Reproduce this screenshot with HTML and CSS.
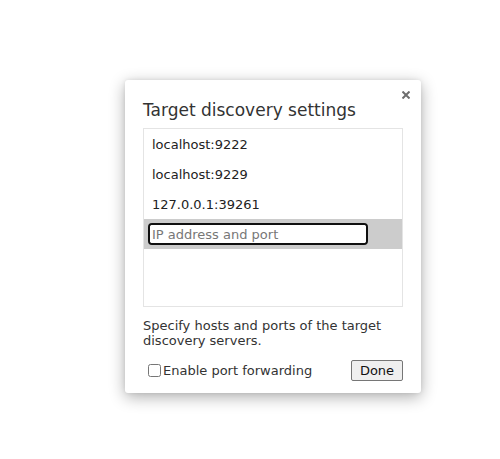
FILE: index.html
```html
<!DOCTYPE html>
<html>
<head>
<meta charset="utf-8">
<link rel="stylesheet" href="styles.css">
</head>
<body>
<div class="stage">
  <div class="dialog">
    <button class="close" aria-label="Close">
      <svg width="8" height="8" viewBox="0 0 8 8"><path d="M0.5 0.5L7.5 7.5M7.5 0.5L0.5 7.5" stroke="#6e6e6e" stroke-width="2" fill="none"/></svg>
    </button>
    <div class="title">Target discovery settings</div>
    <div class="list">
      <div class="item">localhost:9222</div>
      <div class="item">localhost:9229</div>
      <div class="item">127.0.0.1:39261</div>
      <div class="item editing"><input class="field" type="text" placeholder="IP address and port"></div>
    </div>
    <div class="help">Specify hosts and ports of the target discovery servers.</div>
    <div class="footer">
      <label class="check"><input type="checkbox" class="box"><span>Enable port forwarding</span></label>
      <button class="done">Done</button>
    </div>
  </div>
</div>
</body>
</html>
```
FILE: styles.css
```css
html, body {
  margin: 0;
  padding: 0;
  background: #fff;
}
body {
  font-family: "DejaVu Sans", sans-serif;
  color: #222;
  min-height: 459px;
}
.stage {
  padding: 80px 0 40px 125px;
}
.dialog {
  position: relative;
  width: 296px;
  height: 313px;
  box-sizing: border-box;
  background: #fff;
  border-radius: 3px;
  box-shadow: 0 4px 16px rgba(0,0,0,0.32), 0 0 4px rgba(0,0,0,0.08);
  padding: 19px 18px 12px 18px;
  display: flex;
  flex-direction: column;
}
.close {
  position: absolute;
  top: 11px;
  right: 11px;
  width: 8px;
  height: 8px;
  padding: 0;
  border: 0;
  background: none;
  display: flex;
}
.title {
  font-size: 17px;
  line-height: 22px;
  color: #333;
  height: 29px;
}
.list {
  border: 1px solid #e4e4e4;
  height: 177px;
  display: flex;
  flex-direction: column;
}
.item {
  height: 30px;
  display: flex;
  align-items: center;
  padding-left: 8px;
  font-size: 13px;
  color: #222;
}
.item.editing {
  background: #cccccc;
  padding-left: 4px;
}
.field {
  width: 220px;
  height: 22px;
  box-sizing: border-box;
  border: 2px solid #101010;
  border-radius: 4px;
  outline: 1px solid #fff;
  outline-offset: -3px;
  background: #fff;
  font-family: "DejaVu Sans", sans-serif;
  font-size: 13px;
  padding: 0 2px;
  margin: 0;
  color: #222;
}
.field::placeholder {
  color: #777;
}
.help {
  margin-top: 11px;
  font-size: 13px;
  line-height: 15px;
  color: #333;
}
.footer {
  margin-top: auto;
  display: flex;
  align-items: center;
  justify-content: space-between;
}
.check {
  display: flex;
  align-items: center;
  font-size: 13px;
  color: #333;
  padding-left: 1px;
}
.box {
  width: 13px;
  height: 13px;
  margin: 0 2px 0 4px;
}
.done {
  font-family: "DejaVu Sans", sans-serif;
  font-size: 13px;
  height: 21px;
  width: 52px;
  padding: 0;
  background: #efefef;
  border: 1px solid #767676;
  border-radius: 2px;
  color: #111;
}
```
